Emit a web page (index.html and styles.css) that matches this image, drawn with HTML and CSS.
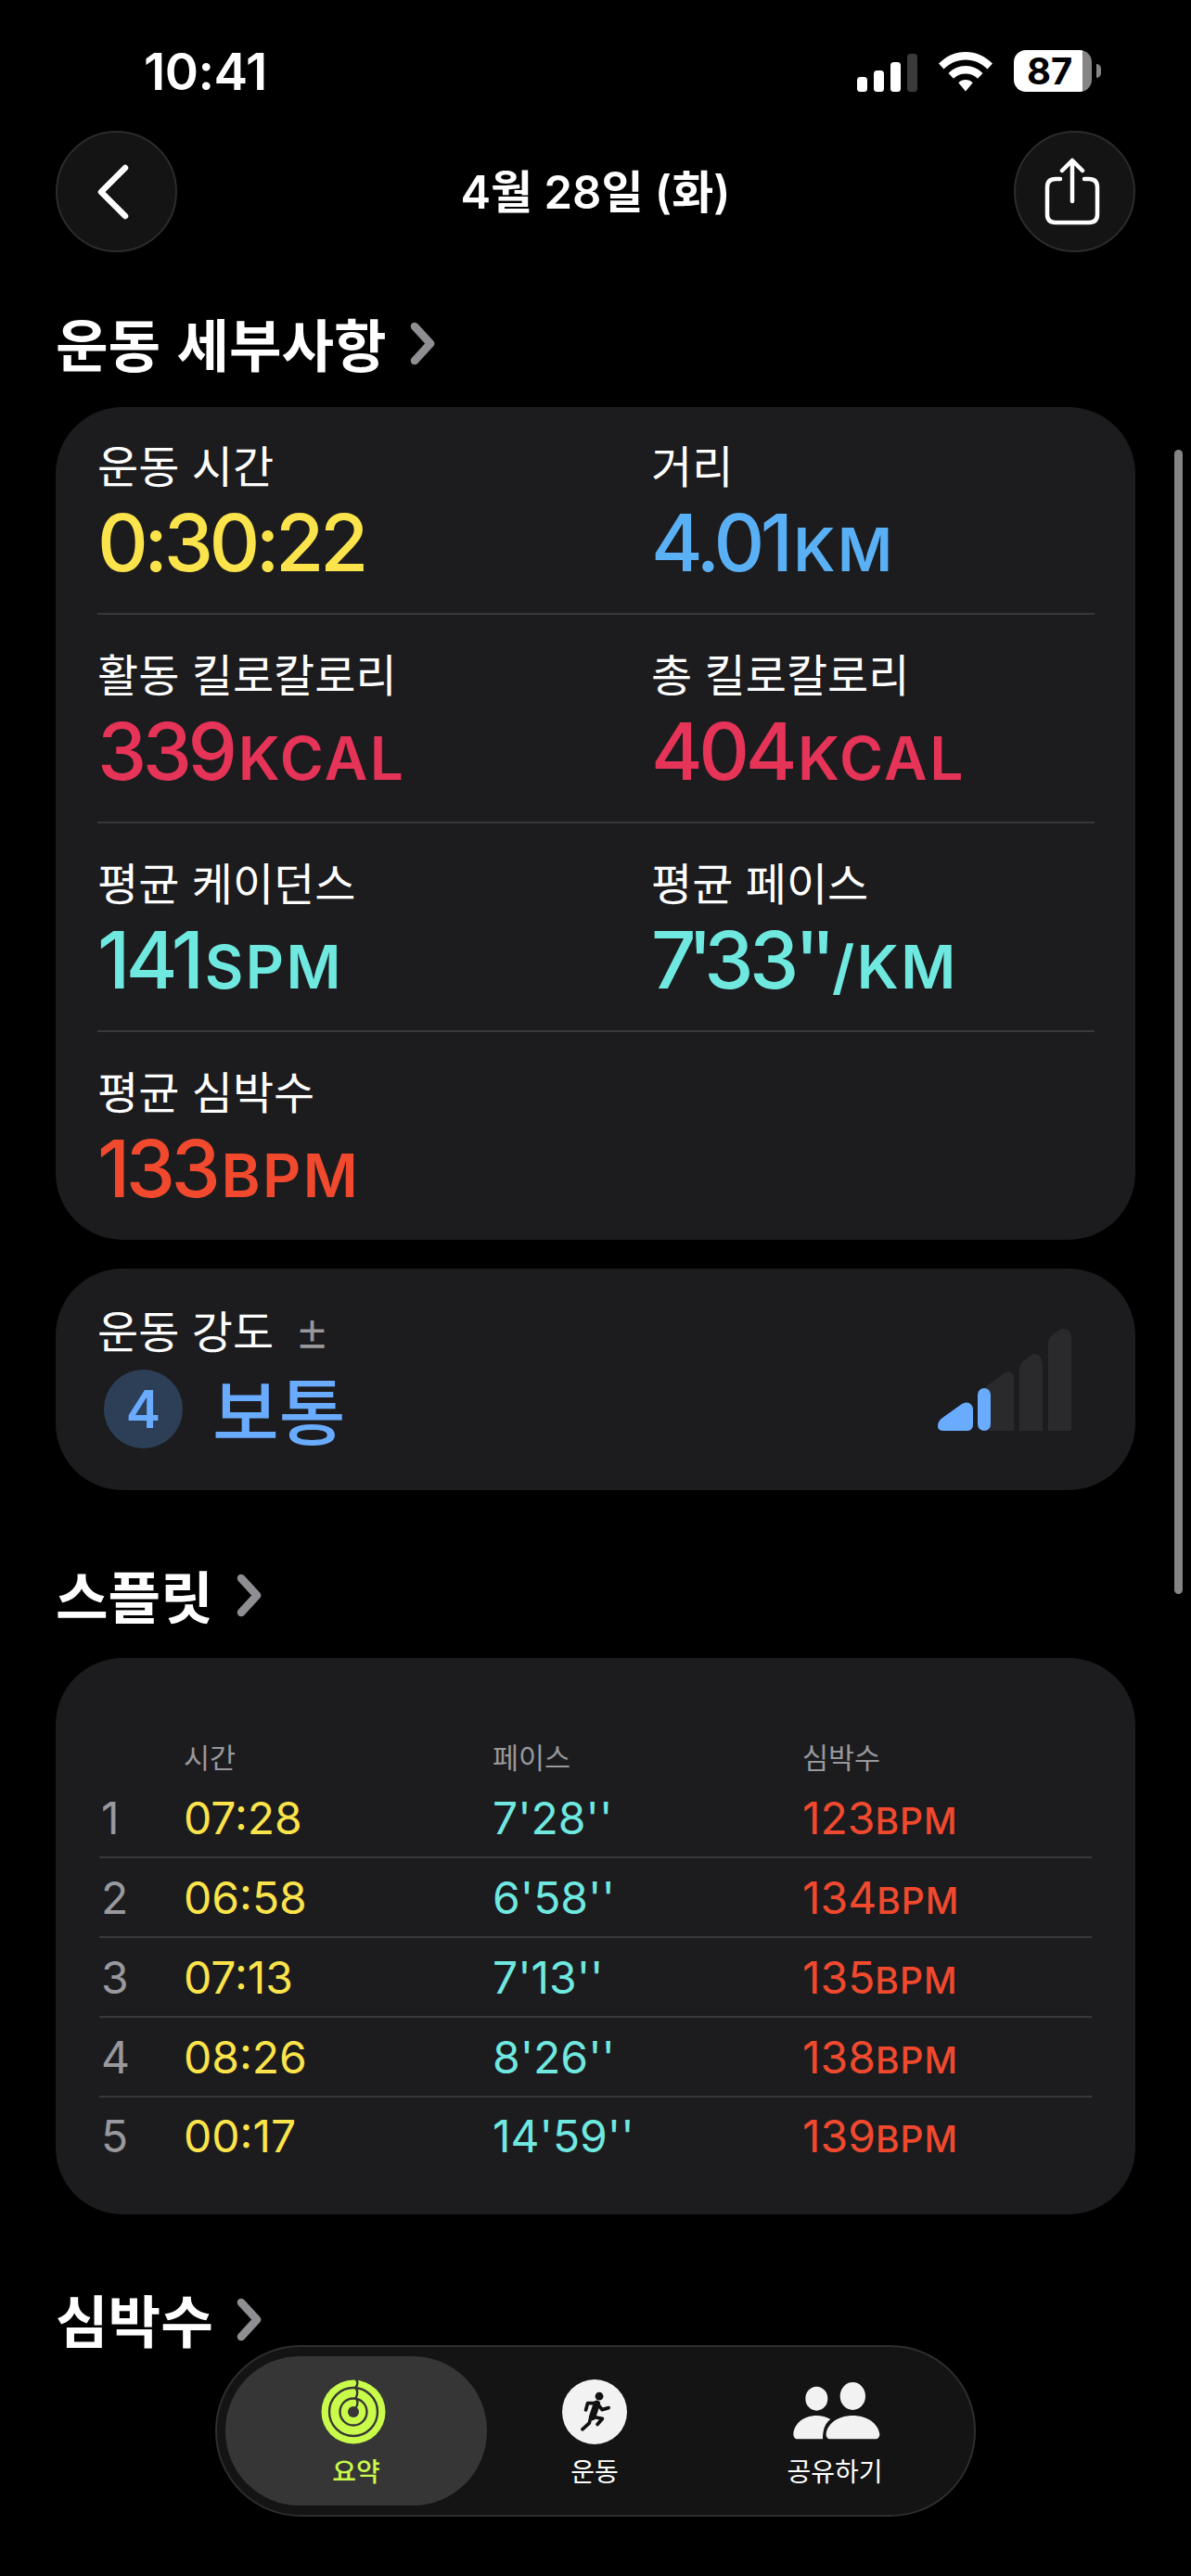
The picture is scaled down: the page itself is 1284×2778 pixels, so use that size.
FILE: index.html
```html
<!DOCTYPE html>
<html lang="ko">
<head>
<meta charset="utf-8">
<title>운동 세부사항</title>
<link rel="stylesheet" href="styles.css">
</head>
<body>
<div class="page">
  <header class="status">
    <span class="clock">10:41</span>
    <div class="status-icons">
      <svg class="signal" width="47" height="41" viewBox="0 0 47 41"><rect x="0" y="25" width="11" height="16" rx="3.5" fill="#fff"/><rect x="18" y="18" width="11" height="23" rx="3.5" fill="#fff"/><rect x="36" y="9" width="11" height="32" rx="3.5" fill="#fff"/></svg>
      <span class="signal-off"></span>
      <svg class="wifi" width="58" height="43" viewBox="0 0 58 43"><path d="M29 0C18 0 8 4.500 0 12.500L5.500 18.500C12 12 20 8.500 29 8.500S46 12 52.500 18.500L58 12.500C50 4.500 40 0 29 0Z" fill="#fff"/><path d="M29 15C22 15 15.500 17.800 10.500 23L16 28.800C19.500 25.300 24 23.500 29 23.500S38.500 25.300 42 28.800L47.500 23C42.500 17.800 36 15 29 15Z" fill="#fff"/><path d="M29 30C26 30 23.500 31 21.300 33.200L29 42.500L36.700 33.200C34.500 31 32 30 29 30Z" fill="#fff"/></svg>
      <span class="battery">87</span>
    </div>
  </header>

  <nav class="navbar">
    <button class="round-btn" type="button" aria-label="뒤로">
      <svg class="back-icon" width="36" height="60" viewBox="0 0 36 60"><path d="M32 4 6 30 32 56" fill="none" stroke="#fff" stroke-width="6.500" stroke-linecap="round" stroke-linejoin="round"/></svg>
    </button>
    <h1 class="nav-title">4월 28일 (화)</h1>
    <button class="round-btn" type="button" aria-label="공유">
      <svg class="share-icon" width="60" height="74" viewBox="0 0 60 74"><path d="M17 23H12C6 23 3 26 3 32V61C3 67 6 70 12 70H48C54 70 57 67 57 61V32C57 26 54 23 48 23H43" fill="none" stroke="#fff" stroke-width="4.500" stroke-linecap="round"/><path d="M30 47V4M19 14 30 3 41 14" fill="none" stroke="#fff" stroke-width="4.500" stroke-linecap="round" stroke-linejoin="round"/></svg>
    </button>
  </nav>

  <h2 class="section-title first">운동 세부사항
    <svg class="chev" width="27" height="47" viewBox="0 0 27 47"><path d="M5 5 22 23.500 5 42" fill="none" stroke="#8e8e93" stroke-width="8.500" stroke-linecap="round" stroke-linejoin="round"/></svg>
  </h2>

  <section class="card stats">
    <div class="stat-row">
      <div class="stat"><div class="stat-label">운동 시간</div><div class="stat-value yellow">0:30:22</div></div>
      <div class="stat"><div class="stat-label">거리</div><div class="stat-value blue">4.01<span class="unit">KM</span></div></div>
    </div>
    <div class="stat-row">
      <div class="stat"><div class="stat-label">활동 킬로칼로리</div><div class="stat-value pink">339<span class="unit">KCAL</span></div></div>
      <div class="stat"><div class="stat-label">총 킬로칼로리</div><div class="stat-value pink">404<span class="unit">KCAL</span></div></div>
    </div>
    <div class="stat-row">
      <div class="stat"><div class="stat-label">평균 케이던스</div><div class="stat-value cyan">141<span class="unit">SPM</span></div></div>
      <div class="stat"><div class="stat-label">평균 페이스</div><div class="stat-value cyan"><span class="prime">7'</span>33<span class="prime">''</span><span class="unit">/KM</span></div></div>
    </div>
    <div class="stat-row last">
      <div class="stat"><div class="stat-label">평균 심박수</div><div class="stat-value orange">133<span class="unit">BPM</span></div></div>
    </div>
  </section>

  <section class="card intensity">
    <div class="intensity-main">
      <div class="intensity-label">운동 강도 <span class="plusminus">±</span></div>
      <div class="intensity-level"><span class="level-num">4</span><span class="level-name">보통</span></div>
    </div>
    <svg class="level-bars" width="144" height="111" viewBox="0 0 144 111">
      <path d="M50 111H82V54C82 47 75 46 70 50L55 61C52 63 50 66 50 70Z" fill="#2a2a2c"/>
      <path d="M88 111H113V42C113 29 106 26 100 30L91 37C89 39 88 42 88 46V104Z" fill="#2a2a2c"/>
      <path d="M119 111H144V10C144 3 137-2 130 3L122 9C120 11 119 14 119 17V104Z" fill="#2a2a2c"/>
      <path d="M0 106C0 102 2 99 5 97L26 82C32 78 38 82 38 88V104C38 108 36 111 32 111H7C3 111 0 110 0 106Z" fill="#69abff"/>
      <rect x="43" y="65" width="14" height="46" rx="7" fill="#69abff"/>
    </svg>
  </section>

  <h2 class="section-title second">스플릿
    <svg class="chev" width="27" height="47" viewBox="0 0 27 47"><path d="M5 5 22 23.500 5 42" fill="none" stroke="#8e8e93" stroke-width="8.500" stroke-linecap="round" stroke-linejoin="round"/></svg>
  </h2>

  <section class="card splits">
    <div class="split-row split-head"><span></span><span>시간</span><span>페이스</span><span>심박수</span></div>
    <div class="split-row"><span class="idx">1</span><span class="yellow">07:28</span><span class="cyan">7'28''</span><span class="orange">123<small class="bpm">BPM</small></span></div>
    <div class="split-row"><span class="idx">2</span><span class="yellow">06:58</span><span class="cyan">6'58''</span><span class="orange">134<small class="bpm">BPM</small></span></div>
    <div class="split-row"><span class="idx">3</span><span class="yellow">07:13</span><span class="cyan">7'13''</span><span class="orange">135<small class="bpm">BPM</small></span></div>
    <div class="split-row"><span class="idx">4</span><span class="yellow">08:26</span><span class="cyan">8'26''</span><span class="orange">138<small class="bpm">BPM</small></span></div>
    <div class="split-row end"><span class="idx">5</span><span class="yellow">00:17</span><span class="cyan">14'59''</span><span class="orange">139<small class="bpm">BPM</small></span></div>
  </section>

  <h2 class="section-title third">심박수
    <svg class="chev" width="27" height="47" viewBox="0 0 27 47"><path d="M5 5 22 23.500 5 42" fill="none" stroke="#8e8e93" stroke-width="8.500" stroke-linecap="round" stroke-linejoin="round"/></svg>
  </h2>

  <div class="scrollbar"></div>

  <div class="tabbar">
    <div class="tab active">
      <svg class="ring-icon" width="70" height="70" viewBox="0 0 70 70">
        <circle cx="35" cy="35" r="34.500" fill="#c9fb4b"/>
        <circle cx="35" cy="35" r="26" fill="none" stroke="#363636" stroke-width="2.400"/>
        <circle cx="35" cy="35" r="14.500" fill="none" stroke="#363636" stroke-width="2.400"/>
        <circle cx="35" cy="35" r="6" fill="#363636"/>
        <path d="M38 0C40 3 40 6 37 9C40 11.500 40 15 37.500 20.500C40.500 23 40 27 37 32" fill="none" stroke="#363636" stroke-width="2.400" stroke-linecap="round"/>
      </svg>
      <span class="tab-label">요약</span>
    </div>
    <div class="tab">
      <svg width="70" height="70" viewBox="37 34 208 208">
        <circle cx="141" cy="138" r="104" fill="#f2f2f2"/>
        <circle cx="156" cy="88" r="13" fill="#111"/>
        <path d="M148 112 134 154" stroke="#111" stroke-width="22" stroke-linecap="round" fill="none"/>
        <path d="M140 110 119 110 113 132M152 114 165 131 186 125M131 153 166 160 150 178M128 158 124 174 102 194" stroke="#111" stroke-width="11" stroke-linecap="round" stroke-linejoin="round" fill="none"/>
      </svg>
      <span class="tab-label">운동</span>
    </div>
    <div class="tab">
      <svg class="people-icon" width="94" height="70" viewBox="44 36 282 210">
        <ellipse cx="120" cy="98" rx="36" ry="39" fill="#f2f2f2"/>
        <ellipse cx="237" cy="90" rx="41" ry="45" fill="#f2f2f2"/>
        <path d="M45 213C47 178 80 153 120 153C135 153 152 157 165 165C150 176 140 195 140 229H58C50 229 45 222 45 213Z" fill="#f2f2f2"/>
        <path d="M151 213C154 178 192 153 237 153C282 153 320 178 324 213C324 222 319 229 310 229H165C156 229 150 222 151 213Z" fill="#f2f2f2"/>
      </svg>
      <span class="tab-label">공유하기</span>
    </div>
  </div>
</div>
</body>
</html>
```

FILE: styles.css
```css
* { box-sizing: border-box; }
html, body { margin: 0; background: #000; }
body { font-family: Inter, "Noto Sans CJK KR", sans-serif; color: #fff; }
.page { position: relative; width: 1284px; height: 2778px; overflow: hidden; background: #000; }

.status { display: flex; justify-content: space-between; align-items: center; height: 141px; padding: 0 107px 0 155px; }
.clock { font-size: 55px; font-weight: 600; letter-spacing: -0.5px; line-height: 60px; margin-top: 12px; }
.status-icons { display: flex; align-items: flex-end; margin-top: 12px; position: relative; }
.signal { display: block; }
.signal-off { width: 11px; height: 41px; border-radius: 3.5px; background: #3a3a3a; margin-left: 7px; }
.wifi { display: block; margin-left: 23px; }
.battery { position: relative; width: 84px; height: 45px; margin-left: 23px; border-radius: 13px; background: linear-gradient(90deg, #fff 88%, #858585 88%); color: #000; font-size: 40px; font-weight: 700; line-height: 45px; padding-left: 14px; }
.battery::after { content: ""; position: absolute; left: 89px; top: 15px; width: 5px; height: 15px; border-radius: 0 8px 8px 0; background: #858585; }

.navbar { display: flex; justify-content: space-between; align-items: center; padding: 0 60px; height: 131px; }
.round-btn { display: flex; align-items: center; justify-content: center; width: 131px; height: 131px; padding: 0; border-radius: 50%; border: 2px solid #2c2c2c; background: #141414; }
.back-icon { margin-right: 10px; }
.share-icon { margin-right: 5px; }
.nav-title { margin: 2px 0 0; font-size: 49px; font-weight: 600; line-height: 60px; }

.section-title { display: flex; align-items: center; gap: 25px; margin: 0; padding-left: 60px; font-family: "Noto Sans CJK KR", sans-serif; font-size: 61.5px; font-weight: 700; line-height: 80px; }
.section-title.first { margin-top: 58px; margin-bottom: 29px; }
.section-title.second { margin-top: 73px; margin-bottom: 28px; }
.section-title.third { margin-top: 73px; }

.card { margin: 0 60px; background: #1c1c1e; border-radius: 72px; }
.stats { padding: 0 44px 0 45px; height: 898px; }
.stat-row { display: flex; height: 225px; padding-top: 32px; border-bottom: 2px solid #38383a; }
.stat-row:first-child { height: 224px; padding-top: 31px; }
.stat-row.last { border-bottom: none; }
.stat { flex: 0 0 597px; }
.stat-label { font-family: "Noto Sans CJK KR", sans-serif; font-size: 48px; line-height: 60px; }
.stat-value { font-size: 85px; font-weight: 500; line-height: 96px; margin-top: 8px; letter-spacing: -4.500px; white-space: nowrap; }
.prime { letter-spacing: -9px; }
.unit { font-size: 64px; font-weight: 600; letter-spacing: 2.5px; margin-left: 5px; }

.yellow { color: #fbe44b; }
.blue { color: #5ab0f5; }
.pink { color: #e63358; }
.cyan { color: #6fe8e0; }
.orange { color: #f0492e; }

.intensity { display: flex; justify-content: space-between; height: 239px; margin-top: 31px; padding: 35px 69px 0 45px; }
.intensity-label { font-family: "Noto Sans CJK KR", sans-serif; font-size: 48px; line-height: 60px; }
.plusminus { color: #98989d; font-size: 36px; font-weight: 600; margin-left: 10px; }
.intensity-level { display: flex; align-items: center; gap: 32px; margin-top: 9px; margin-left: 7px; }
.level-num { display: flex; align-items: center; justify-content: center; width: 85px; height: 85px; border-radius: 50%; background: #2c3f57; color: #69abff; font-size: 56px; font-weight: 600; }
.level-name { font-family: "Noto Sans CJK KR", sans-serif; font-size: 78px; font-weight: 500; color: #69abff; line-height: 85px; }
.level-bars { display: block; margin-top: 29px; }

.splits { height: 600px; padding: 84px 47px 0; }
.split-row { display: grid; grid-template-columns: 91px 333px 334px 1fr; align-items: center; height: 86px; border-bottom: 2px solid #38383a; font-size: 48px; white-space: nowrap; }
.split-row.split-head { height: 46px; padding-bottom: 5px; font-family: "Noto Sans CJK KR", sans-serif; font-size: 30.500px; color: #98989d; border-bottom: none; }
.split-row.end { border-bottom: none; padding-bottom: 4px; }
.idx { color: #98989d; padding-left: 2px; }
.bpm { font-size: 39px; font-weight: 500; letter-spacing: 1px; }

.scrollbar { position: absolute; left: 1266px; top: 485px; width: 9px; height: 1234px; border-radius: 5px; background: #858585; }

.tabbar { position: absolute; left: 232px; top: 2529px; display: grid; grid-template-columns: 282px 232px 286px; width: 820px; height: 185px; padding: 10px 9px; border: 2px solid #2e2e2e; border-radius: 92px; background: #141414; }
.tab { display: flex; flex-direction: column; align-items: center; padding-top: 25px; border-radius: 80px; }
.tab svg { display: block; height: 70px; }
.ring-icon { margin-right: 6px; }
.people-icon { margin-left: 4px; }
.tab.active { background: #363636; }
.tab-label { font-family: "Noto Sans CJK KR", sans-serif; font-size: 28px; line-height: 36px; margin-top: 10px; }
.tab.active .tab-label { color: #c9fb4b; font-weight: 500; }
```
